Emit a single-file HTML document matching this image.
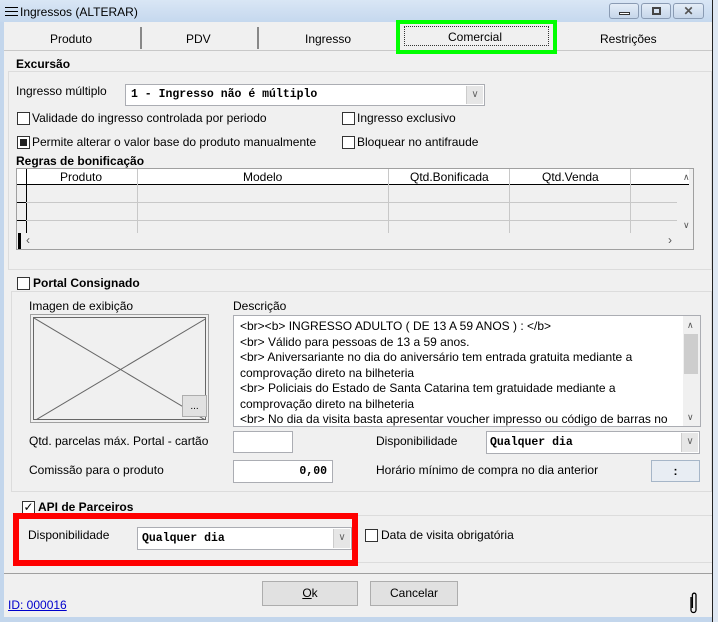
<!DOCTYPE html><html><head><meta charset="utf-8"><style>
*{box-sizing:border-box;margin:0;padding:0}
body{width:718px;height:622px;overflow:hidden;background:#c3d6ec;font-family:"Liberation Sans",sans-serif;font-size:12px;color:#000;position:relative}
.a{position:absolute;white-space:nowrap}
.b{font-weight:bold}
.cb{position:absolute;width:13px;height:13px;border:1px solid #333;background:#fff}
.in{position:absolute;background:#fff;border:1px solid #abadb3}
.mono{font-family:"Liberation Mono",monospace;font-weight:bold;font-size:11.5px}
.dd{position:absolute;right:1px;top:1px;bottom:1px;width:17px;background:#e6e6e6;border-left:1px solid #ccc;text-align:center;font-size:10px;color:#666;line-height:18px}
.grp{position:absolute;border:1px solid #dcdcdc}
.btn{position:absolute;background:#e1e1e1;border:1px solid #adadad;text-align:center;line-height:22px}
</style></head><body>
<div class="a" style="left:0;top:0;width:712px;height:22px;background:linear-gradient(#d9e6f5,#c5d8ee)"></div>
<div class="a" style="left:712px;top:0;width:6px;height:622px;background:#dfe8f3;border-left:1px solid #222"></div>
<div class="a" style="left:5px;top:7px;width:13px;height:1px;background:#000;box-shadow:0 4px 0 #000,0 8px 0 #000"></div>
<div class="a" style="left:20px;top:5px">Ingressos (ALTERAR)</div>
<div class="a" style="left:609px;top:3px;width:30px;height:16px;border:1px solid #8a9bb3;border-radius:3px;background:linear-gradient(#e4edf7,#c6d6ea)"><div style="position:absolute;left:9px;top:8px;width:11px;height:3px;border:1px solid #333;background:#fff"></div></div>
<div class="a" style="left:641px;top:3px;width:30px;height:16px;border:1px solid #8a9bb3;border-radius:3px;background:linear-gradient(#e4edf7,#c6d6ea)"><div style="position:absolute;left:10px;top:3px;width:9px;height:8px;border:2px solid #444"></div></div>
<div class="a" style="left:673px;top:3px;width:31px;height:16px;border:1px solid #8a9bb3;border-radius:3px;background:linear-gradient(#e4edf7,#c6d6ea);text-align:center;font-weight:bold;color:#555;line-height:14px">✕</div>
<div class="a" style="left:4px;top:22px;width:708px;height:596px;background:#f0f0f0"></div>
<div class="a" style="left:4px;top:50px;width:708px;height:1px;background:#c8c8c8"></div>
<div class="a" style="left:140px;top:27px;width:2px;height:22px;background:#888"></div>
<div class="a" style="left:257px;top:27px;width:2px;height:22px;background:#888"></div>
<div class="a" style="left:50px;top:32px">Produto</div>
<div class="a" style="left:186px;top:32px">PDV</div>
<div class="a" style="left:305px;top:32px">Ingresso</div>
<div class="a" style="left:396px;top:20px;width:161px;height:34px;border:4px solid #00ff00"></div>
<div class="a" style="left:404px;top:26px;width:145px;height:20px;border:1px dotted #333"></div>
<div class="a" style="left:448px;top:30px">Comercial</div>
<div class="a" style="left:600px;top:32px">Restrições</div>
<div class="a b" style="left:16px;top:57px">Excursão</div>
<div class="grp" style="left:8px;top:71px;width:704px;height:199px"></div>
<div class="a" style="left:16px;top:84px">Ingresso múltiplo</div>
<div class="in" style="left:125px;top:84px;width:360px;height:22px"><span class="mono a" style="left:5px;top:3px">1 - Ingresso não é múltiplo</span><div class="dd">∨</div></div>
<div class="cb" style="left:17px;top:112px"></div><div class="a" style="left:32px;top:111px">Validade do ingresso controlada por periodo</div>
<div class="cb" style="left:342px;top:112px"></div><div class="a" style="left:357px;top:111px">Ingresso exclusivo</div>
<div class="cb" style="left:17px;top:136px"><div style="margin:2px;width:7px;height:7px;background:#222"></div></div><div class="a" style="left:32px;top:135px">Permite alterar o valor base do produto manualmente</div>
<div class="cb" style="left:342px;top:136px"></div><div class="a" style="left:357px;top:135px">Bloquear no antifraude</div>
<div class="a b" style="left:16px;top:154px">Regras de bonificação</div>
<div class="a" style="left:16px;top:168px;width:678px;height:82px;background:#f0f0f0;border:1px solid #a0a0a0"></div>
<div class="a" style="left:17px;top:169px;width:672px;height:16px;background:#fff;border-bottom:1px solid #000"></div>
<div class="a" style="left:60px;top:170px">Produto</div>
<div class="a" style="left:243px;top:170px">Modelo</div>
<div class="a" style="left:410px;top:170px">Qtd.Bonificada</div>
<div class="a" style="left:542px;top:170px">Qtd.Venda</div>
<div class="a" style="left:26px;top:169px;width:1px;height:64px;background:#000"></div>
<div class="a" style="left:137px;top:169px;width:1px;height:64px;background:#c8c8c8"></div>
<div class="a" style="left:388px;top:169px;width:1px;height:64px;background:#c8c8c8"></div>
<div class="a" style="left:509px;top:169px;width:1px;height:64px;background:#c8c8c8"></div>
<div class="a" style="left:630px;top:169px;width:1px;height:64px;background:#c8c8c8"></div>
<div class="a" style="left:17px;top:202px;width:660px;height:1px;background:#c8c8c8"></div>
<div class="a" style="left:17px;top:220px;width:660px;height:1px;background:#c8c8c8"></div>
<div class="a" style="left:17px;top:202px;width:9px;height:1px;background:#000"></div>
<div class="a" style="left:17px;top:220px;width:9px;height:1px;background:#000"></div>
<div class="a" style="left:18px;top:233px;width:3px;height:16px;background:#000"></div>
<div class="a" style="left:26px;top:233px;color:#555">‹</div>
<div class="a" style="left:668px;top:233px;color:#555">›</div>
<div class="a" style="left:683px;top:172px;font-size:9px;color:#555">∧</div>
<div class="a" style="left:683px;top:220px;font-size:9px;color:#555">∨</div>
<div class="cb" style="left:17px;top:277px"></div><div class="a b" style="left:33px;top:276px">Portal Consignado</div>
<div class="grp" style="left:11px;top:291px;width:701px;height:201px"></div>
<div class="a" style="left:29px;top:299px">Imagen de exibição</div>
<div class="a" style="left:30px;top:314px;width:179px;height:109px;border:1px solid #a0a0a0;padding:2px"><svg width="173" height="103" style="display:block;border:1px solid #666"><line x1="0" y1="0" x2="173" y2="103" stroke="#666"/><line x1="173" y1="0" x2="0" y2="103" stroke="#666"/></svg></div>
<div class="btn" style="left:182px;top:395px;width:25px;height:22px;line-height:22px;font-size:10px">...</div>
<div class="a" style="left:233px;top:299px">Descrição</div>
<div class="in" style="left:233px;top:315px;width:468px;height:112px;line-height:15.5px;padding:3px 0 0 6px;overflow:hidden">&lt;br&gt;&lt;b&gt; INGRESSO ADULTO ( DE 13 A 59 ANOS ) : &lt;/b&gt;<br>&lt;br&gt; Válido para pessoas de 13 a 59 anos.<br>&lt;br&gt; Aniversariante no dia do aniversário tem entrada gratuita mediante a<br>comprovação direto na bilheteria<br>&lt;br&gt; Policiais do Estado de Santa Catarina tem gratuidade mediante a<br>comprovação direto na bilheteria<br>&lt;br&gt; No dia da visita basta apresentar voucher impresso ou código de barras no
<div style="position:absolute;right:0;top:0;width:17px;height:110px;background:#f0f0f0"><div style="position:absolute;left:1px;top:18px;width:14px;height:40px;background:#cdcdcd"></div><div style="position:absolute;left:4px;top:2px;font-size:9px;color:#555">∧</div><div style="position:absolute;left:4px;top:94px;font-size:9px;color:#555">∨</div></div></div>
<div class="a" style="left:29px;top:434px">Qtd. parcelas máx. Portal - cartão</div>
<div class="in" style="left:233px;top:431px;width:60px;height:22px"></div>
<div class="a" style="left:376px;top:434px">Disponibilidade</div>
<div class="in" style="left:486px;top:431px;width:214px;height:23px"><span class="mono a" style="left:3px;top:4px">Qualquer dia</span><div class="dd">∨</div></div>
<div class="a" style="left:29px;top:463px">Comissão para o produto</div>
<div class="in" style="left:233px;top:460px;width:100px;height:23px"><span class="mono a" style="right:5px;top:4px">0,00</span></div>
<div class="a" style="left:376px;top:463px">Horário mínimo de compra no dia anterior</div>
<div class="a" style="left:651px;top:460px;width:49px;height:22px;background:#e8edf3;border:1px solid #a6b6c8;text-align:center;line-height:20px"><b>:</b></div>
<div class="cb" style="left:22px;top:501px;font-size:12px;line-height:11px;text-align:center">✓</div><div class="a b" style="left:38px;top:500px">API de Parceiros</div>
<div class="a" style="left:356px;top:515px;width:356px;height:1px;background:#dcdcdc"></div>
<div class="a" style="left:356px;top:562px;width:356px;height:1px;background:#dcdcdc"></div>
<div class="a" style="left:13px;top:513px;width:345px;height:53px;border:6px solid #ff0000"></div>
<div class="a" style="left:28px;top:528px">Disponibilidade</div>
<div class="in" style="left:137px;top:527px;width:215px;height:23px"><span class="mono a" style="left:4px;top:4px">Qualquer dia</span><div class="dd">∨</div></div>
<div class="cb" style="left:365px;top:529px"></div><div class="a" style="left:381px;top:528px">Data de visita obrigatória</div>
<div class="a" style="left:4px;top:573px;width:708px;height:1px;background:#a0a0a0"></div>
<div class="btn" style="left:262px;top:581px;width:96px;height:25px"><u>O</u>k</div>
<div class="btn" style="left:370px;top:581px;width:88px;height:25px">Cancelar</div>
<div class="a" style="left:8px;top:598px;color:#00c;text-decoration:underline">ID: 000016</div>
<svg class="a" style="left:688px;top:591px" width="10" height="24"><path d="M3 6 V19 a2.5 2.5 0 0 0 5 0 V4 a1.8 1.8 0 0 0 -3.6 0 V17" fill="none" stroke="#000" stroke-width="1.3"/></svg>
<div class="a" style="left:4px;top:617px;width:708px;height:5px;background:#c3d6ec"></div>
</body></html>
